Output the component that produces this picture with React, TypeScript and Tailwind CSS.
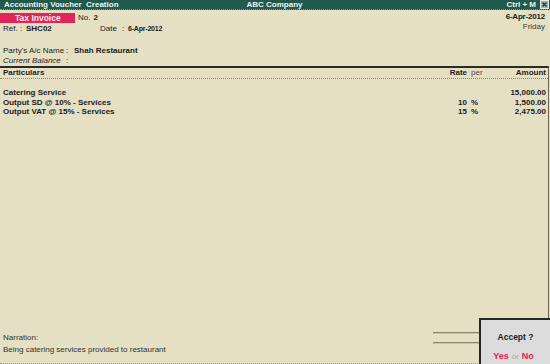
const font = { fontFamily: '"Liberation Sans", Arial, sans-serif' };

const rows = [
  { name: "Catering Service", rate: "", per: "", amount: "15,000.00" },
  { name: "Output SD @ 10% - Services", rate: "10", per: "%", amount: "1,500.00" },
  { name: "Output VAT @ 15% - Services", rate: "15", per: "%", amount: "2,475.00" },
];

const CloseIcon = () => (
  <svg width="9" height="9" viewBox="0 0 9 9">
    <rect x="0.5" y="0.5" width="8" height="8" fill="#9fb3ad" stroke="#e8e8e8" />
    <path d="M2.5 2.5 L6.5 6.5 M6.5 2.5 L2.5 6.5" stroke="#1f3a33" strokeWidth="1.2" />
  </svg>
);

const App = () => {
  return (
    <div
      className="relative w-[550px] h-[364px] overflow-hidden bg-[#e5dfc4] text-[8px] text-[#1c1c1c] flex flex-col"
      style={font}
    >
      {/* title bar */}
      <div className="h-[10px] shrink-0 bg-[#1f5a4c] border-b border-dotted border-[#6f9a8e] flex items-center px-[4px] text-[#f2f2f2] font-bold leading-[9px]">
        <span className="w-[200px]">Accounting Voucher&nbsp; Creation</span>
        <span className="flex-1 text-center pr-[4px]">ABC Company</span>
        <div className="w-[200px] flex items-center justify-end gap-[4px] -mr-[3px]">
          <span>Ctrl + M</span>
          <CloseIcon />
        </div>
      </div>

      {/* header */}
      <div className="flex justify-between shrink-0 h-[56px]">
        <div className="flex flex-col pt-[3px]">
          <div className="flex items-center h-[10px] leading-[10px]">
            <div className="w-[75px] h-[10px] bg-[#e2245a] text-[#fbe9ee] font-bold text-[8.5px] pl-[15px]">
              Tax Invoice
            </div>
            <span className="ml-[3px]">No.</span>
            <span className="ml-[3px] font-bold">2</span>
          </div>
          <div className="flex items-center h-[10px] leading-[10px] pl-[3px] mt-[1px]">
            <span className="w-[23px]">Ref. :</span>
            <span className="w-[74px] font-bold">SHC02</span>
            <span className="w-[22px]">Date</span>
            <span className="w-[6px]">:</span>
            <span className="font-bold text-[7px] tracking-[-0.2px]">6-Apr-2012</span>
          </div>
          <div className="flex items-center h-[10px] leading-[10px] pl-[3px] mt-[12px]">
            <span className="w-[63px]">Party's A/c Name</span>
            <span className="w-[8px]">:</span>
            <span className="font-bold">Shah Restaurant</span>
          </div>
          <div className="flex items-center h-[9px] leading-[9px] pl-[3px]">
            <span className="w-[63px] italic">Current Balance</span>
            <span className="w-[8px]">:</span>
          </div>
        </div>
        <div className="flex flex-col items-end pt-[2px] pr-[5px]">
          <div className="h-[10px] leading-[10px] font-bold tracking-[-0.2px]">6-Apr-2012</div>
          <div className="h-[10px] leading-[10px] text-[#3a3a3a]">Friday</div>
        </div>
      </div>

      {/* table */}
      <div className="flex-1 flex flex-col border-t-2 border-[#2a2a2a] border-r border-r-[#6b6656] mr-[1px]">
        <div className="flex items-center h-[10px] leading-[10px] border-b border-dotted border-[#8a846e] box-content font-bold">
          <span className="flex-1 pl-[3px]">Particulars</span>
          <span className="w-[30px] text-right">Rate</span>
          <span className="w-[19px] pl-[4px] font-normal text-[#4a4a4a]">per</span>
          <span className="w-[62px] text-right pr-[2px]">Amount</span>
        </div>
        <div className="flex flex-col pt-[9px] font-bold">
          {rows.map((r) => (
            <div key={r.name} className="flex items-center h-[9.5px] leading-[9.5px]">
              <span className="flex-1 pl-[3px]">{r.name}</span>
              <span className="w-[30px] text-right">{r.rate}</span>
              <span className="w-[19px] pl-[4px]">{r.per}</span>
              <span className="w-[62px] text-right pr-[2px]">{r.amount}</span>
            </div>
          ))}
        </div>
      </div>

      {/* footer */}
      <div className="h-[34px] shrink-0 flex border-b border-dotted border-[#9a9480]">
        <div className="flex-1 flex flex-col pt-[3px] pl-[3px]">
          <div className="h-[10px] leading-[10px] text-[#333]">Narration:</div>
          <div className="h-[10px] leading-[10px] mt-[2px] text-[#333]">
            Being catering services provided to restaurant
          </div>
        </div>
        <div className="w-[117px] flex flex-col pt-[2px] gap-[8px]">
          <div className="h-[2px] bg-[#8c8570] border-b border-[#c9c2a8]" />
          <div className="h-[2px] bg-[#8c8570] border-b border-[#c9c2a8]" />
        </div>
      </div>

      {/* accept prompt */}
      <div className="absolute right-0 bottom-0 w-[71px] h-[46px] bg-[#dcdcdc] border-2 border-r-0 border-b-0 border-[#262626] flex flex-col items-center">
        <div className="mt-[12px] font-bold text-[8.5px] leading-[10px]">Accept ?</div>
        <div className="mt-[9px] flex items-baseline gap-[3px] leading-[10px] -ml-[4px]">
          <span className="font-bold text-[9px] text-[#e5204c]">Yes</span>
          <span className="text-[#a8a8a8]">or</span>
          <span className="font-bold text-[9px] text-[#e5204c]">No</span>
        </div>
      </div>
    </div>
  );
};

export default App;
